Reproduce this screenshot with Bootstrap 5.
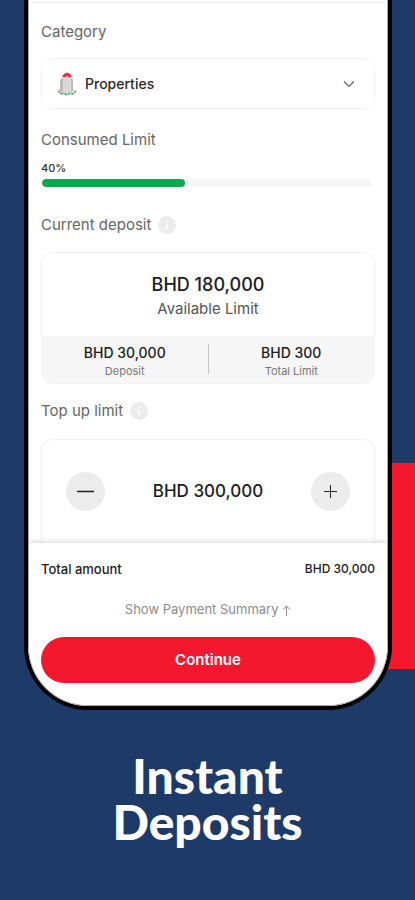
<!DOCTYPE html>
<html lang="en">
<head>
<meta charset="utf-8">
<meta name="viewport" content="width=device-width, initial-scale=1">
<title>Instant Deposits</title>
<link href="https://cdn.jsdelivr.net/npm/bootstrap@5.3.0/dist/css/bootstrap.min.css" rel="stylesheet">
<style>
  body { background: #1e3a69; font-family: Inter, "Liberation Sans", sans-serif; color: #1c1c1c; }
  .stage { min-height: 100vh; overflow: hidden; }
  .accent { position: absolute; right: 0; top: 463px; width: 50%; height: 206px; background: #f4182f; }
  .phone { margin: 0 23px 0 24px; background: #fff; border: solid #000; border-width: 0 4px 4px; border-radius: 0 0 64px 64px; overflow: hidden; }
  .screen { border: solid #aaa; border-width: 0 1px 1px; border-radius: 0 0 60px 60px; overflow: hidden; }
  .topline { height: 3px; border-bottom: 1px solid #ececec; margin-bottom: 19px; }
  .inset { padding: 0 12px; }
  .label { font-size: 15px; line-height: 20px; font-weight: 400; color: #666; }
  .outline { border: 1px solid #f2f2f2; border-radius: 12px; }
  .picker { height: 51px; padding: 0 19px 0 14px; margin: 16px 0 21px; }
  .picker select { appearance: none; border: 0; background: none; font-size: 14px; font-weight: 500; color: #2b2b2b; line-height: 20px; padding: 0; }
  .percent { font-size: 11px; line-height: 16px; font-weight: 500; color: #333; margin-top: 10px; }
  .progress { height: 8px; background: #f6f6f6; margin: 3px 4px 28px 1px; }
  .progress-bar { background: #0caa50; border-radius: 4px; }
  .info { width: 18px; height: 18px; margin-left: 7px; }
  .panel { margin: 17px 0; }
  .figures { padding: 18px 0 17px; }
  .big { font-size: 18px; line-height: 28px; font-weight: 500; }
  .sub { font-size: 15px; line-height: 20px; color: #555; }
  .split { background: #f6f6f6; padding: 8px 0 3px; border-radius: 0 0 11px 11px; }
  .rule-v { width: 1px; height: 30px; background: #c4c4c4; }
  .mid { font-size: 14px; line-height: 18px; font-weight: 500; }
  .tiny { font-size: 11px; line-height: 18px; color: #777; }
  .stepper { border-bottom: 0; border-radius: 12px 12px 0 0; padding: 32px 24px; margin-top: 18px; }
  .round { width: 39px; height: 39px; border: 0; border-radius: 50%; background: #ececec; padding: 0; color: #222; }
  .amount { font-size: 17px; font-weight: 500; }
  .foot { background: #fff; box-shadow: 0 -2px 5px #00000022; padding: 16px 12px 22px; }
  .total { font-size: 13px; line-height: 20px; font-weight: 500; }
  .sum { font-size: 12px; }
  .summary { display: block; font-size: 13px; line-height: 20px; color: #8b8b8b; text-decoration: none; margin: 20px 0 18px; }
  .continue { height: 46px; border: 0; border-radius: 23px; background: #f4182f; color: #fff; font-size: 15px; font-weight: 600; }
  .headline { font-family: Lato, sans-serif; font-size: 48px; line-height: 46px; font-weight: 900; color: #fff; margin: 43px 0 0; }
</style>
<script src="https://cdn.jsdelivr.net/npm/bootstrap@5.3.0/dist/js/bootstrap.bundle.min.js"></script>
</head>
<body>
<main class="stage position-relative">
  <div class="accent"></div>
  <section class="phone position-relative">
   <div class="screen">
    <div class="topline"></div>
    <div class="inset">
      <label class="label d-block" for="category">Category</label>
      <div class="outline picker d-flex align-items-center">
        <svg class="me-2" width="21" height="24" viewBox="0 0 21 24" aria-hidden="true">
          <path d="M1 19l4-2h12l4 2-3 2-2 2-2-1-3 2-3-2-3 1-2-3z" fill="#d5ebdd"/>
          <path d="M2 19l3 3 3-1 3 2 3-2 3 1 3-3" stroke="#3fae74" stroke-width="1.500" stroke-dasharray="3 1" fill="none"/>
          <path d="M1 18l4-1 2 3-3 1z" fill="#eeb4b4"/>
          <path d="M4 8q2-3 4-2v14l-4-1zM14 6q3-1 3 2v11l-3 1z" fill="#bdbabb"/>
          <path d="M7 4q4-2 8 0v16l-4 1-4-1z" fill="#d0cecf"/>
          <path d="M8 5v15M11 6v15M14 5v15" stroke="#ebe9ea" fill="none"/>
          <path d="M6 4.500l2-2.500 3-1.500 3 1.500 2 2.500-3 1-2-2-2 2z" fill="#ef2939"/>
        </svg>
        <select id="category" class="flex-grow-1"><option>Properties</option></select>
        <svg width="12" height="8" viewBox="0 0 12 8" fill="none" stroke="#666" stroke-width="1.2" aria-hidden="true"><path d="M1 1.500l5 5 5-5"/></svg>
      </div>
      <div class="label">Consumed Limit</div>
      <div class="percent">40%</div>
      <div class="progress" role="progressbar" aria-label="Consumed limit" aria-valuenow="40" aria-valuemin="0" aria-valuemax="100"><div class="progress-bar" style="width:43.500%"></div></div>
      <div class="label d-flex align-items-center">Current deposit
        <svg class="info" viewBox="0 0 18 18" aria-hidden="true"><circle cx="9" cy="9" r="9" fill="#ececec"/><path d="M9 4.500v1.500M9 7.500v6" stroke="#fff" stroke-width="1.500"/></svg>
      </div>
      <div class="outline panel text-center">
        <div class="figures">
          <div class="big">BHD 180,000</div>
          <div class="sub">Available Limit</div>
        </div>
        <div class="split d-flex">
          <div class="flex-fill w-50"><div class="mid">BHD 30,000</div><div class="tiny">Deposit</div></div>
          <div class="rule-v"></div>
          <div class="flex-fill w-50"><div class="mid">BHD 300</div><div class="tiny">Total Limit</div></div>
        </div>
      </div>
      <div class="label d-flex align-items-center">Top up limit
        <svg class="info" viewBox="0 0 18 18" aria-hidden="true"><circle cx="9" cy="9" r="9" fill="#ececec"/><path d="M9 4.500v1.500M9 7.500v6" stroke="#fff" stroke-width="1.500"/></svg>
      </div>
      <div class="outline stepper d-flex align-items-center justify-content-between">
        <button class="round d-flex align-items-center justify-content-center" type="button" aria-label="Decrease"><svg width="17" height="17" viewBox="0 0 17 17" stroke="currentColor" stroke-width="1.500"><path d="M0 8.500h17"/></svg></button>
        <div class="amount">BHD 300,000</div>
        <button class="round d-flex align-items-center justify-content-center" type="button" aria-label="Increase"><svg width="13" height="13" viewBox="0 0 13 13" stroke="currentColor"><path d="M0 6.500h13M6.500 0v13"/></svg></button>
      </div>
    </div>
    <div class="foot position-relative">
      <div class="total d-flex justify-content-between"><span>Total amount</span><span class="sum">BHD 30,000</span></div>
      <a href="#" class="summary text-center">Show Payment Summary <svg width="9" height="11" viewBox="0 0 9 11" fill="none" stroke="currentColor" aria-hidden="true"><path d="M4.500 11V1M1 4.500L4.500 1 8 4.500"/></svg></a>
      <button class="continue w-100" type="button">Continue</button>
    </div>
   </div>
  </section>
  <h1 class="headline text-center">Instant<br>Deposits</h1>
</main>
</body>
</html>
